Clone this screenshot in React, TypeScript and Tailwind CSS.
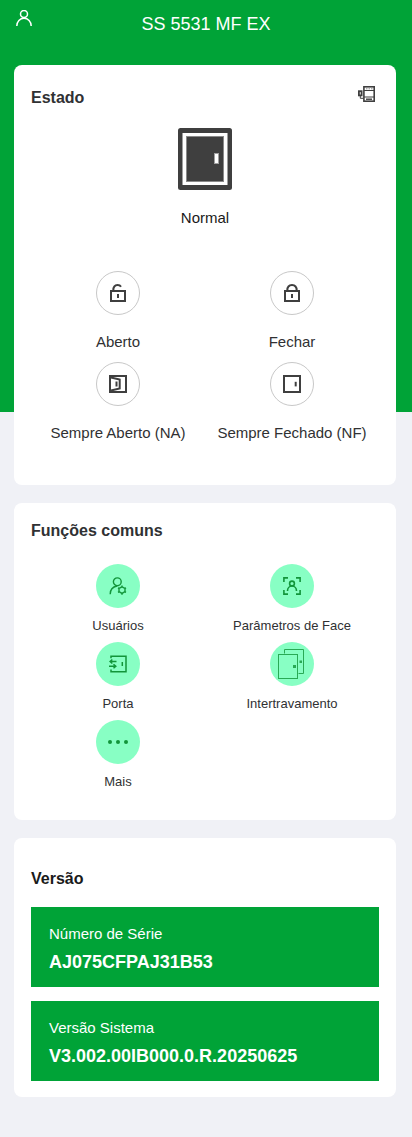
import React from 'react';

const UserIcon = () => (
    <svg className="size-4" viewBox="0 0 16 16" fill="none" stroke="currentColor" strokeWidth="1.5">
        <circle cx="8" cy="4" r="3.5" />
        <path d="M.8 16C.8 11.500 4 8.300 8 8.300s7.200 3.200 7.200 7.700" />
    </svg>
);

const DeviceIcon = () => (
    <svg className="h-4 w-[17px]" viewBox="0 0 17 16" fill="none" stroke="currentColor">
        <rect x="5.900" y=".8" width="10.300" height="14.400" strokeWidth="1.600" />
        <path d="M6 4.500h10M6 11h10" strokeWidth="1.200" />
        <path d="M8 2.800h1.500M10.500 2.800H12M13 2.800h1.500" strokeWidth="1" opacity=".6" />
        <path d="M8 13.200h6" strokeWidth="1.400" />
        <rect x=".9" y="5.200" width="2.700" height="4.200" strokeWidth="1.800" />
        <path d="M2.300 9.500v2.800h3.200" strokeWidth="1" />
    </svg>
);

const DoorStatus = () => (
    <svg className="h-[62px] w-[54px]" viewBox="0 0 54 62">
        <rect width="54" height="62" rx="2.500" fill="#3f3f3f" />
        <rect x="4.500" y="5" width="45" height="52" fill="#fff" />
        <rect x="8.500" y="8.500" width="37" height="45" fill="#3f3f3f" stroke="#8a8a8a" />
        <rect x="36.500" y="25.500" width="4" height="10" fill="#fff" stroke="#a0a0a0" />
    </svg>
);

const UnlockIcon = () => (
    <svg className="size-[18px]" viewBox="0 0 18 18" fill="none" stroke="currentColor" strokeWidth="2">
        <rect x="2" y="7" width="14" height="10" />
        <path d="M4.300 6.500C4.300 2.500 6.300 1 8.500 1c1.700 0 2.800.6 3.500 1.800" />
        <path d="M9 10v4" />
    </svg>
);

const LockIcon = () => (
    <svg className="size-[18px]" viewBox="0 0 18 18" fill="none" stroke="currentColor" strokeWidth="2">
        <rect x="2" y="7" width="14" height="10" />
        <path d="M4.300 6.500C4.300 2.800 6.300 1 9 1s4.700 1.800 4.700 5.500" />
        <path d="M9 10v4" />
    </svg>
);

const OpenDoorIcon = () => (
    <svg className="size-[18px]" viewBox="0 0 18 18" fill="none" stroke="currentColor" strokeWidth="2">
        <rect x="1" y="1" width="16" height="16" />
        <path d="M2 2.500l8.700 2v9L2 15.500" />
        <path d="M7.500 6.500v5" />
    </svg>
);

const ClosedDoorIcon = () => (
    <svg className="size-[18px]" viewBox="0 0 18 18" fill="none" stroke="currentColor" strokeWidth="2">
        <rect x="1" y="1" width="16" height="16" />
        <path d="M12.700 6.800v4.600" />
    </svg>
);

const UserGearIcon = () => (
    <svg className="size-[18px]" viewBox="0 0 18 18" fill="none" stroke="currentColor" strokeWidth="1.400">
        <circle cx="8.300" cy="4.800" r="3.900" />
        <path d="M1.200 17.200c0-4.200 2.600-7.400 6.800-8.200" />
        <path d="M13 9.800l3 1.700v3.200l-3 1.700-3-1.700v-3.200z" />
        <path d="M13 8.500v1.300M13 16.400v1.300M9 10.800l1 .6M17 10.800l-1 .6M9 15.400l1-.6M17 15.400l-1-.6" />
    </svg>
);

const FaceIcon = () => (
    <svg className="size-[18px]" viewBox="0 0 18 18" fill="none" stroke="currentColor" strokeWidth="1.600">
        <path d="M.9 5V.9H5M13 .9h4.100V5M17.100 13v4.100H13M5 17.100H.9V13" />
        <circle cx="9" cy="6.500" r="2.400" />
        <path d="M4.500 14c0-2.900 1.900-5 4.500-5s4.500 2.100 4.500 5" />
    </svg>
);

const DoorAccessIcon = () => (
    <svg className="size-[18px]" viewBox="0 0 18 18" fill="none" stroke="currentColor" strokeWidth="1.500">
        <path d="M2 3.200V1.200h15v15.600H2v-2.300" />
        <path d="M7.500 6.500H1M3.300 4.500l-2.300 2 2.300 2M0 11.200h7M4.500 9.200l2.300 2-2.300 2" />
        <path d="M13.300 7v4" />
    </svg>
);

const InterlockIcon = () => (
    <svg className="h-[30px] w-7" viewBox="0 0 28 30" fill="none" stroke="currentColor" strokeWidth="1" opacity=".8">
        <path d="M6.500 4.500v-4h19v24h-5" />
        <rect x=".5" y="5.500" width="19" height="24" />
        <rect x="15.500" y="16.500" width="2" height="2" fill="currentColor" />
        <rect x="22" y="12" width="1.500" height="1.500" fill="currentColor" />
    </svg>
);

const MoreIcon = () => (
    <svg className="h-1 w-5" viewBox="0 0 20 4" fill="currentColor">
        <circle cx="2" cy="2" r="2" />
        <circle cx="10" cy="2" r="2" />
        <circle cx="18" cy="2" r="2" />
    </svg>
);

const doorActions = [
    { label: 'Aberto', icon: UnlockIcon },
    { label: 'Fechar', icon: LockIcon },
    { label: 'Sempre Aberto (NA)', icon: OpenDoorIcon },
    { label: 'Sempre Fechado (NF)', icon: ClosedDoorIcon },
];

const functions = [
    { label: 'Usuários', icon: UserGearIcon },
    { label: 'Parâmetros de Face', icon: FaceIcon },
    { label: 'Porta', icon: DoorAccessIcon },
    { label: 'Intertravamento', icon: InterlockIcon },
    { label: 'Mais', icon: MoreIcon },
];

const versions = [
    { label: 'Número de Série', value: 'AJ075CFPAJ31B53' },
    { label: 'Versão Sistema', value: 'V3.002.00IB000.0.R.20250625' },
];

const App = () => (
    <div className="min-h-screen bg-[#f0f1f6] bg-[linear-gradient(#00a337_412px,#f0f1f6_412px)] pb-10 font-['Liberation_Sans',Arial,sans-serif] text-[#303133]">
        <header className="grid grid-cols-[32px_1fr_32px] items-start px-4 pt-[10px] pb-[27px] text-white">
            <button type="button" aria-label="Conta" className="justify-self-start">
                <UserIcon />
            </button>
            <h1 className="text-center text-lg leading-7">SS 5531 MF EX</h1>
        </header>

        <main className="mr-4 ml-[14px] flex flex-col gap-[18px]">
            <section className="rounded-lg bg-white px-[17px] pt-[21px] pb-[42px]">
                <div className="flex items-start justify-between">
                    <h2 className="text-base leading-6 font-bold">Estado</h2>
                    <button type="button" aria-label="Dispositivo" className="mr-1 text-[#3f3f3f]">
                        <DeviceIcon />
                    </button>
                </div>
                <div className="mt-[18px] flex flex-col items-center gap-4">
                    <DoorStatus />
                    <p className="text-[15px] leading-6 text-[#1a1a1a]">Normal</p>
                </div>
                <div className="mt-[41px] grid grid-cols-2 gap-y-[10px]">
                    {doorActions.map(({ label, icon: Icon }) => (
                        <button key={label} type="button" className="flex flex-col items-center gap-[17px]">
                            <span className="flex size-11 items-center justify-center rounded-full border border-[#c8c8c8] text-[#3f3f3f]">
                                <Icon />
                            </span>
                            <span className="text-[15px] leading-5 whitespace-nowrap">{label}</span>
                        </button>
                    ))}
                </div>
            </section>

            <section className="rounded-lg bg-white px-[17px] pt-4 pb-7">
                <h2 className="text-base leading-6 font-bold">Funções comuns</h2>
                <div className="mt-[21px] grid grid-cols-2 gap-y-[6px]">
                    {functions.map(({ label, icon: Icon }) => (
                        <button key={label} type="button" className="flex flex-col items-center gap-2">
                            <span className="flex size-11 items-center justify-center rounded-full bg-[#88ffc4] text-[#12953a]">
                                <Icon />
                            </span>
                            <span className="text-[13px] leading-5">{label}</span>
                        </button>
                    ))}
                </div>
            </section>

            <section className="rounded-lg bg-white px-[17px] pt-[29px] pb-4">
                <h2 className="text-base leading-6 font-bold text-[#1a1a1a]">Versão</h2>
                <dl className="mt-4 flex flex-col gap-[14px]">
                    {versions.map(({ label, value }) => (
                        <div key={label} className="bg-[#00a337] px-[18px] pt-[17px] pb-[13px] text-white">
                            <dt className="text-[15px] leading-5">{label}</dt>
                            <dd className="mt-[6px] text-lg leading-6 font-bold">{value}</dd>
                        </div>
                    ))}
                </dl>
            </section>
        </main>
    </div>
);

export default App;
